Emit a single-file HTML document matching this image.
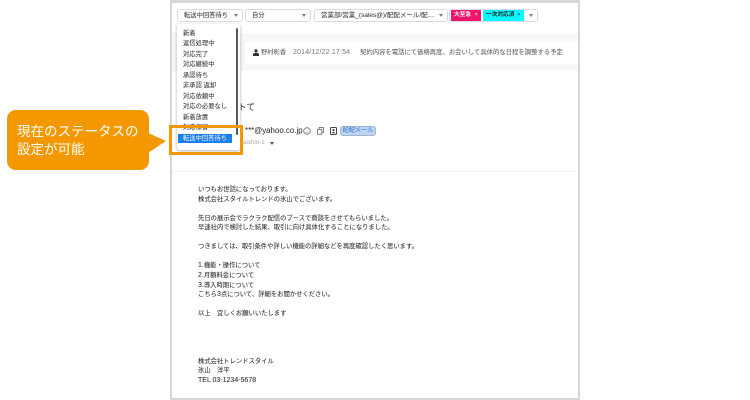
<!DOCTYPE html>
<html lang="ja">
<head>
<meta charset="utf-8">
<title>転送中回答待ち</title>
<style>
html,body{margin:0;padding:0;background:#fff}
body{width:750px;height:400px;position:relative;overflow:hidden;font-family:"Liberation Sans","Noto Sans CJK JP",sans-serif;color:#444}
.a{position:absolute;white-space:nowrap}
.sel{position:absolute;top:9px;height:13px;box-sizing:border-box;border:1px solid #d5dbe6;border-radius:3px;background:#fff;font-size:6.3px;line-height:11px;padding-left:6px;color:#444;white-space:nowrap;overflow:hidden;text-shadow:0 0 .4px rgba(0,0,0,.35)}
.car{position:absolute;width:0;height:0;border-left:2.5px solid transparent;border-right:2.5px solid transparent;border-top:3px solid #75808f}
.t{position:absolute;font-size:6.32px;line-height:9.53px;white-space:pre;left:198px;top:185.2px;color:#333;text-shadow:0 0 .4px rgba(0,0,0,.35)}
.t span{font-size:7px}
.dd{position:absolute;left:177px;top:24px;width:63px;height:126px;background:#fff;border-radius:0 0 3px 3px;box-shadow:0 1px 3px rgba(0,0,0,.3)}
.it{position:absolute;left:6px;font-size:6.3px;line-height:9px;color:#444;white-space:nowrap;text-shadow:0 0 .4px rgba(0,0,0,.35)}
.tg{position:absolute;font-size:5.7px;line-height:9px;font-weight:bold;white-space:nowrap}
</style>
</head>
<body>
<!-- frame -->
<div class="a" style="left:170px;top:0;width:410px;height:2.5px;background:#d6d6d8"></div>
<div class="a" style="left:170px;top:0;width:2px;height:400px;background:#d6d6d8"></div>
<div class="a" style="left:578px;top:0;width:2px;height:400px;background:#d6d6d8"></div>
<div class="a" style="left:170px;top:398px;width:410px;height:2px;background:#d6d6d8"></div>

<!-- band -->
<div class="a" style="left:172px;top:32.5px;width:406px;height:38.5px;background:#f6f7f8"></div>
<div class="a" style="left:245px;top:42px;width:333px;height:22px;background:#fff"></div>
<div class="a" style="left:172px;top:171px;width:406px;height:1px;background:#f2f2f2"></div>

<!-- top selects -->
<div class="sel" style="left:177px;width:66px">転送中回答待ち</div>
<div class="car" style="left:233.5px;top:14px"></div>
<div class="sel" style="left:245px;width:66px">自分</div>
<div class="car" style="left:301.5px;top:14px"></div>
<div class="sel" style="left:314px;width:134px;font-size:6.5px">営業部/営業_(sales@)/配配メール/配…</div>
<div class="car" style="left:438.5px;top:14px"></div>
<div class="sel" style="left:449px;width:89px"></div>
<div class="a" style="left:451px;top:10px;width:30px;height:11px;background:#f0146a"></div>
<div class="tg" style="left:454px;top:11.2px;color:#fff">大至急</div>
<div class="tg" style="left:474.5px;top:11.2px;color:#fff;font-weight:normal">×</div>
<div class="a" style="left:483px;top:10px;width:41px;height:11px;background:#00ffff"></div>
<div class="tg" style="left:486px;top:11.2px;color:#222">一次対応済</div>
<div class="tg" style="left:517px;top:11.2px;color:#222;font-weight:normal">×</div>
<div class="car" style="left:529px;top:14px"></div>

<!-- info row -->
<svg class="a" style="left:253px;top:49px" width="6" height="7" viewBox="0 0 6 7"><circle cx="3" cy="1.8" r="1.6" fill="#333"/><path d="M0 7V5.4C0 4.4 1.4 3.8 3 3.8S6 4.4 6 5.4V7Z" fill="#333"/></svg>
<div class="a" style="left:261px;top:47.5px;font-size:6.3px;line-height:10px;color:#555">野村彰香</div>
<div class="a" style="left:293px;top:47.5px;font-size:7px;line-height:10px;color:#777;letter-spacing:.17px">2014/12/22 17:54</div>
<div class="a" style="left:360px;top:47.5px;font-size:6.35px;line-height:10px;color:#666;text-shadow:0 0 .4px rgba(0,0,0,.25)">契約内容を電話にて価格再度、お会いして具体的な日程を調整する予定</div>

<!-- subject -->
<div class="a" style="left:238px;top:101px;font-size:8.5px;line-height:12px;color:#333">トて</div>

<!-- sender -->
<div class="a" style="left:245px;top:126px;font-size:7.9px;line-height:10px;color:#222">***@yahoo.co.jp</div>
<svg class="a" style="left:303px;top:127px" width="8" height="8" viewBox="0 0 8 8"><circle cx="4" cy="4" r="3.3" fill="none" stroke="#777" stroke-width=".8"/><path d="M2.5 4.8C3 5.8 5 5.8 5.5 4.8" fill="none" stroke="#777" stroke-width=".6"/></svg>
<svg class="a" style="left:317px;top:127px" width="7" height="8" viewBox="0 0 7 8"><rect x="2.2" y=".5" width="4.3" height="5" fill="none" stroke="#666" stroke-width=".8"/><rect x=".5" y="2.3" width="4.3" height="5" fill="#fff" stroke="#666" stroke-width=".8"/></svg>
<svg class="a" style="left:329.5px;top:127px" width="7" height="8" viewBox="0 0 7 8"><rect x=".5" y=".5" width="6" height="7" rx=".7" fill="#fff" stroke="#444" stroke-width="1"/><circle cx="3.5" cy="3" r="1.1" fill="#444"/><path d="M1.6 6.2C2 4.6 5 4.6 5.4 6.2Z" fill="#444"/></svg>
<div class="a" style="left:340px;top:126px;width:36px;height:10px;box-sizing:border-box;background:#bcd4f5;border:1px solid #a6b4c8;border-radius:3px;font-size:6.2px;line-height:8px;color:#3b74d0;text-align:center">配配メール</div>
<div class="a" style="left:243px;top:138px;font-size:6.2px;line-height:10px;color:#aaa">aishin-1</div>
<div class="car" style="left:270px;top:142px;border-top-color:#555"></div>

<!-- body -->
<div class="t">いつもお世話になっております。
株式会社スタイルトレンドの氷山でございます。

先日の展示会でラクラク配信のブースで商談をさせてもらいました。
早速社内で検討した結果、取引に向け具体化することになりました。

つきましては、取引条件や詳しい機能の詳細などを再度確認したく思います。

<span>1.</span>機能・操作について
<span>2.</span>月額料金について
<span>3.</span>導入時期について
こちら<span>3</span>点について、詳細をお聞かせください。

以上　宜しくお願いいたします




株式会社トレンドスタイル
氷山　洋平
<span>TEL 03-1234-5678</span></div>

<!-- dropdown -->
<div class="dd">
  <div class="it" style="top:4.5px">新着</div>
  <div class="it" style="top:15px">返信処理中</div>
  <div class="it" style="top:25.5px">対応完了</div>
  <div class="it" style="top:36px">対応継続中</div>
  <div class="it" style="top:46.5px">承認待ち</div>
  <div class="it" style="top:57px">非承認 返却</div>
  <div class="it" style="top:67.5px">対応依頼中</div>
  <div class="it" style="top:78px">対応の必要なし</div>
  <div class="it" style="top:88.5px">新着放置</div>
  <div class="it" style="top:99px">対応保留</div>
  <div class="a" style="left:1px;top:110.3px;width:54px;height:9px;background:#1a7ff0"></div>
  <div class="it" style="top:110.3px;color:#fff">転送中回答待ち</div>
  <div class="a" style="left:59px;top:4px;width:2px;height:107px;background:#525a6b;border-radius:1px"></div>
</div>

<!-- orange highlight -->
<div class="a" style="left:169px;top:125px;width:74px;height:30px;box-sizing:border-box;border:3px solid #f39800"></div>

<!-- callout -->
<svg class="a" style="left:0;top:0" width="170" height="180" viewBox="0 0 170 180"><rect x="7" y="110" width="142" height="60" rx="9" fill="#f39800"/><path d="M148 133L166 141L148 153Z" fill="#f39800"/></svg>
<div class="a" style="left:17px;top:123px;font-size:13.5px;line-height:18px;color:#fff">現在のステータスの<br>設定が可能</div>
</body>
</html>
